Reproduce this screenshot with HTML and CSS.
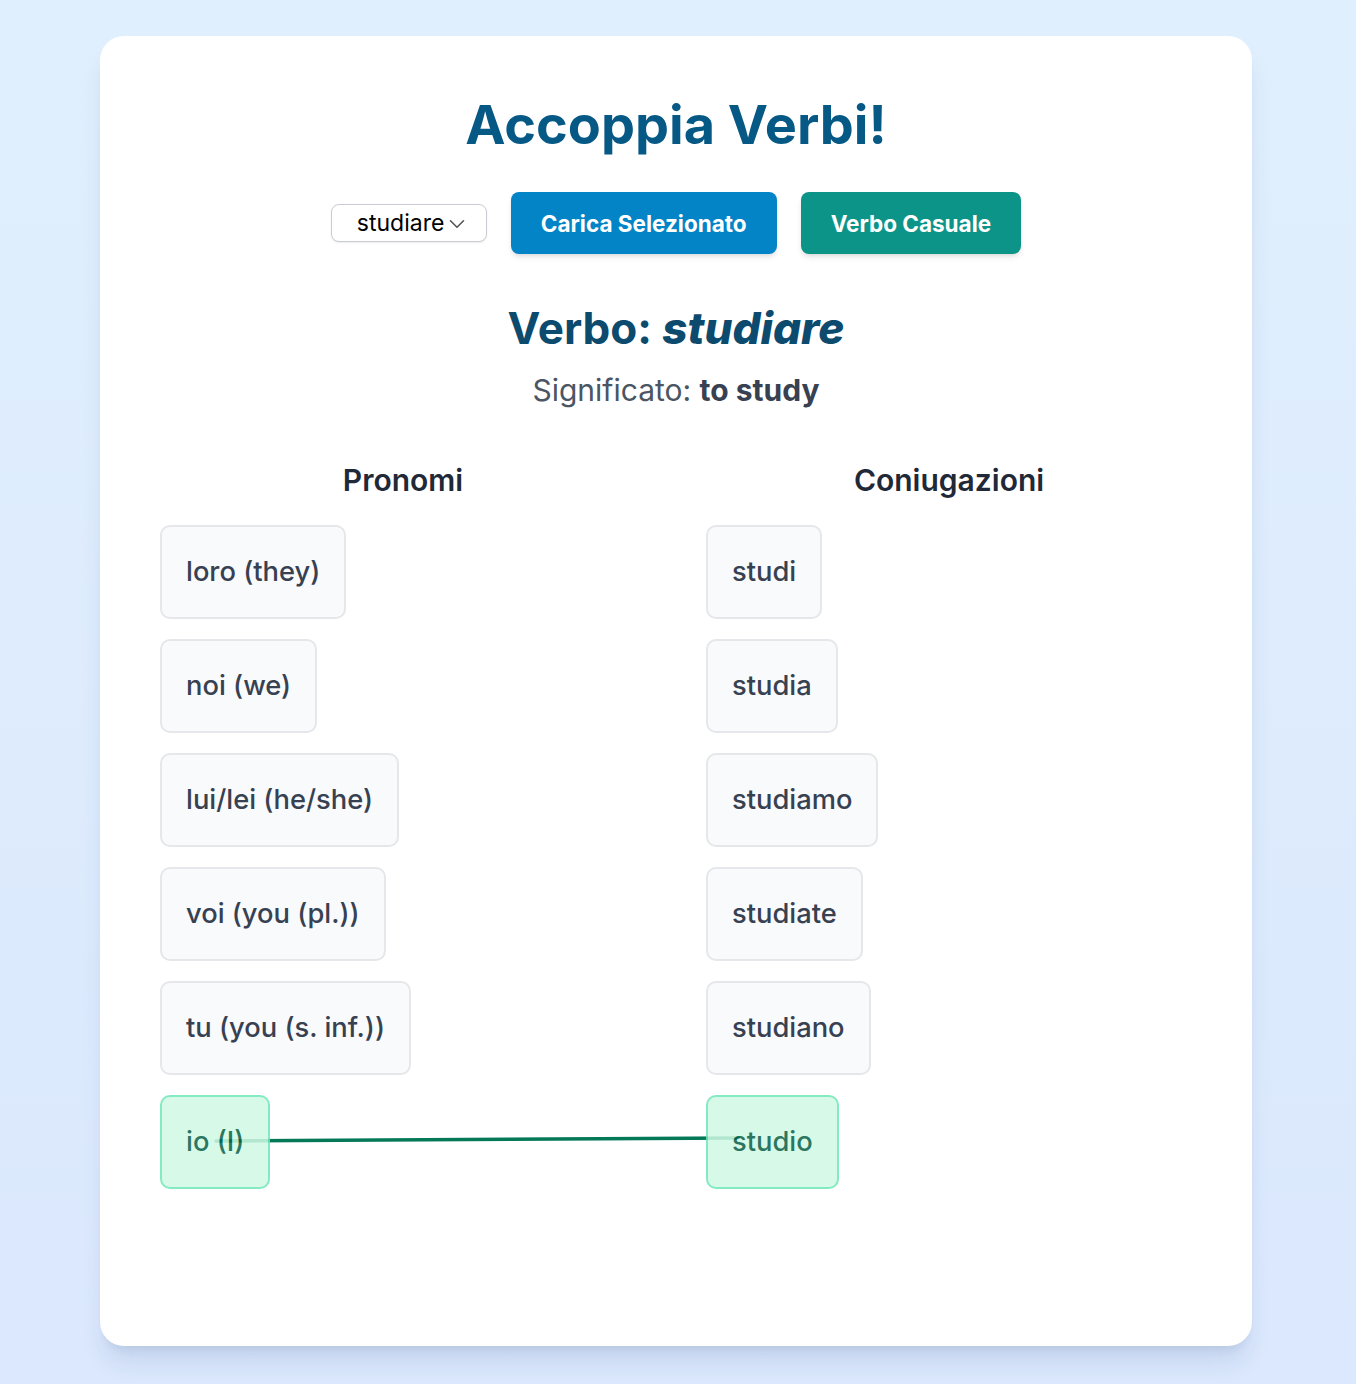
FILE: index.html
```html
<!DOCTYPE html>
<html lang="it">
<head>
<meta charset="utf-8">
<title>Accoppia Verbi!</title>
<link rel="stylesheet" href="styles.css">
</head>
<body>
<main class="panel">
  <h1 class="title">Accoppia Verbi!</h1>
  <div class="controls">
    <div class="select-wrap">
      <select class="verb-select">
        <option>studiare</option>
      </select>
      <svg class="chevron" width="16" height="10" viewBox="0 0 16 10"><path d="M1.5 1.8 L8 8.2 L14.5 1.8" fill="none" stroke="#555" stroke-width="1.6" stroke-linecap="round" stroke-linejoin="round"/></svg>
    </div>
    <button class="btn btn-blue">Carica Selezionato</button>
    <button class="btn btn-teal">Verbo Casuale</button>
  </div>
  <h2 class="verb-heading">Verbo: <em>studiare</em></h2>
  <p class="meaning">Significato: <strong>to study</strong></p>
  <section class="board">
    <svg class="links" width="1032" height="740" viewBox="0 0 1032 740">
      <line x1="56" y1="679" x2="578" y2="676" stroke="#047857" stroke-width="3.5" stroke-linecap="round"/>
    </svg>
    <div class="column">
      <h3 class="col-title">Pronomi</h3>
      <div class="tile">loro (they)</div>
      <div class="tile">noi (we)</div>
      <div class="tile">lui/lei (he/she)</div>
      <div class="tile">voi (you (pl.))</div>
      <div class="tile">tu (you (s. inf.))</div>
      <div class="tile matched">io (I)</div>
    </div>
    <div class="column">
      <h3 class="col-title">Coniugazioni</h3>
      <div class="tile">studi</div>
      <div class="tile">studia</div>
      <div class="tile">studiamo</div>
      <div class="tile">studiate</div>
      <div class="tile">studiano</div>
      <div class="tile matched">studio</div>
    </div>
  </section>
</main>
</body>
</html>
```

FILE: styles.css
```css
* { box-sizing: border-box; }
html, body { margin: 0; }
body {
  min-height: 1384px;
  padding: 36px 4px 38px 0;
  background: linear-gradient(180deg, #e0effd 0%, #dbe8fd 100%);
  font-family: Inter, "Noto Sans", sans-serif;
}
.panel {
  width: 1152px;
  margin: 0 auto;
  background: #ffffff;
  border-radius: 24px;
  padding: 60px 60px 157px;
  box-shadow: 0 20px 25px -5px rgba(30, 64, 120, 0.12), 0 8px 10px -6px rgba(30, 64, 120, 0.1);
  text-align: center;
}
.title {
  margin: 0 0 38px;
  font-size: 54px;
  line-height: 58px;
  font-weight: 700;
  color: #075985;
}
.controls {
  display: flex;
  justify-content: center;
  align-items: center;
  gap: 24px;
  margin-bottom: 48px;
}
.select-wrap {
  position: relative;
  width: 156px;
  height: 38px;
}
.verb-select {
  appearance: none;
  -webkit-appearance: none;
  width: 100%;
  height: 100%;
  border: 1px solid #c9cdd3;
  border-radius: 8px;
  background: #fff;
  font-family: Inter, sans-serif;
  font-size: 23px;
  color: #000;
  padding: 0 30px 0 25px;
  box-shadow: 0 1px 2px rgba(0,0,0,0.08);
}
.chevron {
  position: absolute;
  right: 22px;
  top: 15px;
}
.btn {
  height: 62px;
  padding: 0 30px;
  border: none;
  border-radius: 8px;
  font-family: Inter, sans-serif;
  font-size: 22.5px;
  font-weight: 700;
  color: #fff;
  box-shadow: 0 4px 6px -1px rgba(0,0,0,0.1), 0 2px 4px -2px rgba(0,0,0,0.1);
}
.btn-blue { background: #0284c7; }
.btn-teal { background: #0d9488; }
.verb-heading {
  margin: 0;
  font-size: 44px;
  line-height: 1.2;
  font-weight: 700;
  color: #0c4a6e;
}
.verb-heading em { font-style: italic; font-weight: 800; }
.meaning {
  margin: 15px 0 0;
  font-size: 30px;
  line-height: 40px;
  color: #4b5563;
}
.meaning strong { color: #374151; font-weight: 700; }
.board {
  position: relative;
  display: grid;
  grid-template-columns: 1fr 1fr;
  column-gap: 60px;
  margin-top: 52px;
  text-align: left;
}
.links {
  position: absolute;
  left: 0;
  top: 0;
  z-index: 0;
  pointer-events: none;
}
.column {
  display: flex;
  flex-direction: column;
  align-items: flex-start;
  gap: 20px;
}
.col-title {
  align-self: stretch;
  margin: 0 0 7px;
  text-align: center;
  font-size: 30px;
  line-height: 36px;
  font-weight: 600;
  color: #1f2937;
}
.tile {
  position: relative;
  z-index: 1;
  padding: 24px;
  font-size: 27.3px;
  line-height: 42px;
  font-weight: 500;
  color: #374151;
  background: #f8fafc;
  border: 2px solid #e5e7eb;
  border-radius: 10px;
}
.tile.matched {
  background: #d1fae5;
  border-color: #6ee7b7;
  color: #065f46;
  opacity: 0.85;
}
```
